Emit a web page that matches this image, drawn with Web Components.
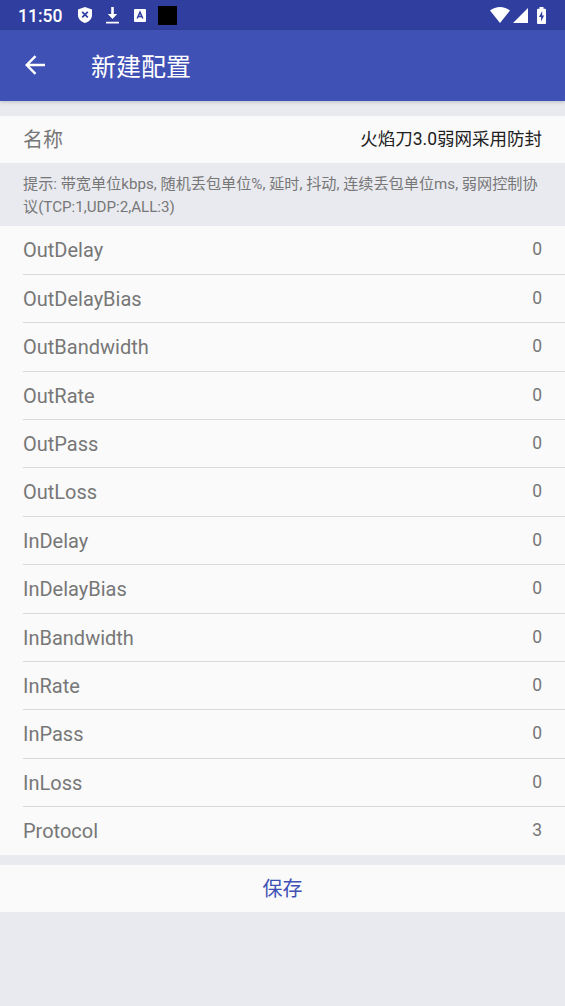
<!DOCTYPE html>
<html lang="zh-CN">
<head>
<meta charset="utf-8">
<title>新建配置</title>
<style>
  body {
    margin: 0;
    background: #e9eaef;
    font-family: Roboto, "Noto Sans CJK SC", sans-serif;
    color: #777;
  }
</style>
</head>
<body>
<config-page></config-page>

<script>
// ── Barre de statut ──────────────────────────────────────────────────────────
class StatusBar extends HTMLElement {
  constructor() {
    super();
    const shadow = this.attachShadow({ mode: "open" });
    shadow.innerHTML = `
      <style>
        :host {
          display: flex;
          align-items: center;
          box-sizing: border-box;
          height: 30px;
          padding: 0 19px 0 18px;
          background: #303f9f;
          color: #fff;
        }
        .time { font-size: 17.5px; font-weight: 500; line-height: 30px; width: 60px; padding-top: 1px; }
        svg { display: block; fill: #fff; flex: none; }
        .download { margin-left: 14px; }
        .letter { margin-left: 15px; }
        .square { width: 19px; height: 19px; margin-left: 12px; background: #000; }
        .wifi { margin-left: auto; }
        .signal { margin-left: 3px; }
        .battery { margin-left: 9px; }
      </style>
      <span class="time"><slot></slot></span>
      <svg class="shield" width="14" height="16" viewBox="0 0 14 16">
        <path d="M7 0 14 2.6V8C14 11.8 11 15 7 16 3 15 0 11.8 0 8V2.6Z"/>
        <path d="M4.2 4.8 9.8 10.4M9.8 4.8 4.2 10.4" stroke="#303f9f" stroke-width="1.7"/>
      </svg>
      <svg class="download" width="13" height="17" viewBox="0 0 13 17">
        <path d="M5.2 0h2.6v7h3.4L6.5 12 1.8 7h3.4ZM0 14.8h13v1.6H0Z"/>
      </svg>
      <svg class="letter" width="12" height="13" viewBox="0 0 12 13">
        <rect width="12" height="13" rx="1"/>
        <path d="M3.2 9.5 6 3.2 8.8 9.5M4.2 7.5h3.6" fill="none" stroke="#303f9f" stroke-width="1.5"/>
      </svg>
      <span class="square"></span>
      <svg class="wifi" width="20" height="16" viewBox="0 0 20 16">
        <path d="M0 3.6C5.8-1.2 14.2-1.2 20 3.6L10 16Z"/>
      </svg>
      <svg class="signal" width="15" height="15" viewBox="0 0 15 15">
        <path d="M15 0V15H0Z"/>
      </svg>
      <svg class="battery" width="9" height="17" viewBox="0 0 9 17">
        <path d="M2.5 0h4v1.7H8Q9 1.7 9 2.7V16Q9 17 8 17H1Q0 17 0 16V2.7Q0 1.7 1 1.7H2.5Z"/>
        <path d="M5.2 4 2 10H4.1V14.5L7.1 8.5H5.2Z" fill="#303f9f"/>
      </svg>
    `;
  }
}
customElements.define("status-bar", StatusBar);

// ── Barre d'application ──────────────────────────────────────────────────────
class AppToolbar extends HTMLElement {
  constructor() {
    super();
    const shadow = this.attachShadow({ mode: "open" });
    shadow.innerHTML = `
      <style>
        :host {
          display: flex;
          align-items: center;
          box-sizing: border-box;
          height: 70.5px;
          padding: 0 25px;
          background: #3f51b5;
          color: #fff;
          box-shadow: 0 1px 4px rgba(0, 0, 0, 0.2);
        }
        svg { display: block; margin-right: 45px; }
        h1 { margin: 0; padding-top: 5px; font-size: 25px; font-weight: 400; line-height: 36px; }
      </style>
      <svg width="21" height="20" viewBox="0 0 21 20" fill="none" stroke="#fff" stroke-width="2.4">
        <path d="M20 10H2.5M10.5 1.2 1.7 10 10.5 18.8"/>
      </svg>
      <h1><slot></slot></h1>
    `;
  }
}
customElements.define("app-toolbar", AppToolbar);

// ── Ligne libellé / valeur ───────────────────────────────────────────────────
class ConfigRow extends HTMLElement {
  constructor() {
    super();
    const shadow = this.attachShadow({ mode: "open" });
    shadow.innerHTML = `
      <style>
        :host {
          display: block;
          box-sizing: border-box;
          height: 48.4px;
          padding-left: 23px;
          background: #fafafa;
        }
        :host([last]) { height: 47.6px; }
        .row {
          display: flex;
          justify-content: space-between;
          box-sizing: border-box;
          height: 100%;
          padding-right: 23px;
          border-bottom: 1px solid #d9d9db;
        }
        :host([last]) .row { border-bottom: none; }
        .label { font-size: 20px; line-height: 49.6px; }
        .value { font-size: 17.5px; line-height: 46.8px; color: var(--value-color, #777); }
      </style>
      <div class="row">
        <span class="label"></span>
        <span class="value"><slot></slot></span>
      </div>
    `;
    this._label = shadow.querySelector(".label");
  }

  static get observedAttributes() { return ["label"]; }

  attributeChangedCallback(name, _old, value) {
    if (name === "label") this._label.textContent = value;
  }
}
customElements.define("config-row", ConfigRow);

// ── Texte d'aide ─────────────────────────────────────────────────────────────
class HintText extends HTMLElement {
  constructor() {
    super();
    const shadow = this.attachShadow({ mode: "open" });
    shadow.innerHTML = `
      <style>
        :host {
          display: block;
          box-sizing: border-box;
          height: 63.4px;
          padding: 10px 23px 0;
          font-size: 15.15px;
          line-height: 22.5px;
        }
      </style>
      <slot></slot>
    `;
  }
}
customElements.define("hint-text", HintText);

// ── Bouton d'enregistrement ──────────────────────────────────────────────────
class SaveButton extends HTMLElement {
  constructor() {
    super();
    const shadow = this.attachShadow({ mode: "open" });
    shadow.innerHTML = `
      <style>
        :host { display: block; margin-top: 10.3px; }
        button {
          display: block;
          width: 100%;
          height: 47px;
          padding: 2px 0 0;
          border: none;
          background: #fafafa;
          color: #3f51b5;
          font: inherit;
          font-size: 20px;
          line-height: 45px;
        }
      </style>
      <button type="button"><slot></slot></button>
    `;
  }
}
customElements.define("save-button", SaveButton);

// ── Page ─────────────────────────────────────────────────────────────────────
const FIELDS = [
  ["OutDelay", 0],
  ["OutDelayBias", 0],
  ["OutBandwidth", 0],
  ["OutRate", 0],
  ["OutPass", 0],
  ["OutLoss", 0],
  ["InDelay", 0],
  ["InDelayBias", 0],
  ["InBandwidth", 0],
  ["InRate", 0],
  ["InPass", 0],
  ["InLoss", 0],
  ["Protocol", 3],
];

class ConfigPage extends HTMLElement {
  constructor() {
    super();
    const shadow = this.attachShadow({ mode: "open" });
    const rows = FIELDS.map(([label, value], i) =>
      `<config-row label="${label}"${i === FIELDS.length - 1 ? " last" : ""}>${value}</config-row>`
    ).join("");
    shadow.innerHTML = `
      <style>
        :host { display: block; min-height: 1006px; }
        .name { height: 47.5px; margin-top: 15px; --value-color: #212121; }
      </style>
      <status-bar>11:50</status-bar>
      <app-toolbar>新建配置</app-toolbar>
      <config-row class="name" label="名称" last>火焰刀3.0弱网采用防封</config-row>
      <hint-text>提示: 带宽单位kbps, 随机丢包单位%, 延时, 抖动, 连续丢包单位ms, 弱网控制协议(TCP:1,UDP:2,ALL:3)</hint-text>
      ${rows}
      <save-button>保存</save-button>
    `;
  }
}
customElements.define("config-page", ConfigPage);
</script>
</body>
</html>
